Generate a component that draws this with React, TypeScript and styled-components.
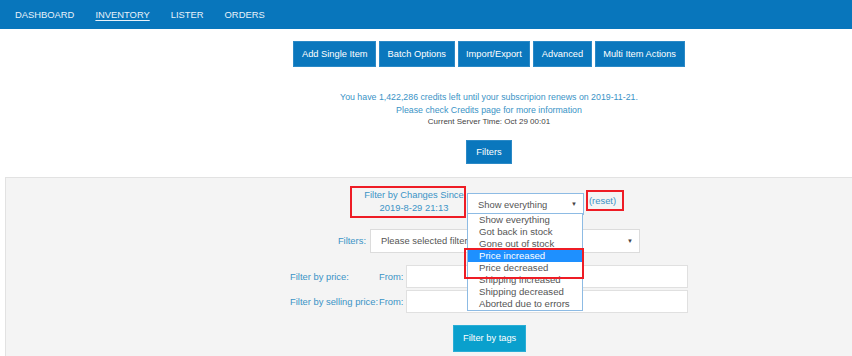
import styled, { createGlobalStyle } from "styled-components";

const GlobalStyle = createGlobalStyle`
  html, body {
    margin: 0;
    padding: 0;
    background: #fff;
    overflow: hidden;
  }
  body {
    font-family: "Liberation Sans", Arial, sans-serif;
    font-size: 9.4px;
    color: #555;
  }
  * {
    box-sizing: border-box;
  }
`;

const Page = styled.div`
  width: 852px;
  height: 356px;
  overflow: hidden;
`;

const NavBar = styled.nav`
  height: 29px;
  background: #0876bc;
  display: flex;
  align-items: center;
  padding-left: 15px;
  gap: 21px;
`;

const NavLink = styled.a<{ $active?: boolean }>`
  color: #e8f2fa;
  font-size: 9.4px;
  text-transform: uppercase;
  text-decoration: ${(p) => (p.$active ? "underline" : "none")};
  text-underline-offset: 2px;
  cursor: pointer;
`;

const Main = styled.div`
  padding-left: 126px;
  display: flex;
  flex-direction: column;
  align-items: center;
`;

const Toolbar = styled.div`
  display: flex;
  gap: 3px;
  margin-top: 12px;
`;

const BlueButton = styled.button<{ $tone?: "primary" | "info" }>`
  height: ${(p) => (p.$tone === "info" ? "27px" : "26px")};
  padding: 0 ${(p) => (p.$tone === "info" ? "9px" : "7.5px")};
  background: ${(p) => (p.$tone === "info" ? "#0aa0cd" : "#0a77bd")};
  border: 1px solid ${(p) => (p.$tone === "info" ? "#2aaed6" : "#2b89c6")};
  color: #fff;
  font-family: "Liberation Sans", Arial, sans-serif;
  font-size: 9.3px;
  cursor: pointer;
`;

const Notice = styled.div`
  margin-top: 24px;
  text-align: center;
  line-height: 12.5px;
  color: #3a93c6;
  font-size: 8.8px;
`;

const ServerTime = styled.div`
  color: #444;
  font-size: 8px;
`;

const FiltersToggle = styled(BlueButton)`
  margin-top: 11px;
  height: 24px;
  padding: 0 9px;
`;

const Panel = styled.div`
  margin: 13px -20px 0 5px;
  background: #f4f4f4;
  border: 1px solid #e2e2e2;
  height: 200px;
  padding-top: 8px;
`;

const Row = styled.div<{ $indent: number; $top?: number }>`
  display: flex;
  align-items: center;
  padding-left: ${(p) => p.$indent}px;
  margin-top: ${(p) => p.$top ?? 0}px;
`;

const Marked = styled.div`
  border: 2px solid #ee1c25;
`;

const ChangesLabel = styled(Marked)`
  width: 116px;
  height: 32px;
  padding: 0 0 0 12px;
  text-align: center;
  line-height: 13px;
  color: #3a93c6;
  position: relative;
  z-index: 2;
`;

const ResetBox = styled(Marked)`
  margin: -2px 0 0 2px;
  width: 38px;
  height: 21px;
  display: flex;
  align-items: center;
  padding-left: 1px;
  color: #3a93c6;
`;

const SelectWrap = styled.div`
  position: relative;
  margin-top: 5px;
  margin-left: 1px;
`;

const SelectBox = styled.div<{ $width: number; $height: number; $focused?: boolean }>`
  width: ${(p) => p.$width}px;
  height: ${(p) => p.$height}px;
  margin-left: ${(p) => (p.$focused ? 0 : 4)}px;
  background: #fff;
  border: 1px solid ${(p) => (p.$focused ? "#8dbbe4" : "#dcdcdc")};
  display: flex;
  align-items: center;
  justify-content: space-between;
  padding: 0 6px 0 10px;
  color: #555;
`;

const Arrow = styled.span`
  font-size: 6px;
  color: #444;
`;

const OptionList = styled.ul`
  position: absolute;
  top: 20px;
  left: 0;
  width: 116px;
  margin: 0;
  padding: 0;
  list-style: none;
  background: #fff;
  border: 1px solid #8dbbe4;
  z-index: 3;
`;

const OptionItem = styled.li<{ $selected?: boolean }>`
  height: 12px;
  line-height: 12px;
  padding-left: 11px;
  font-size: 9.6px;
  background: ${(p) => (p.$selected ? "#1e90ff" : "transparent")};
  color: ${(p) => (p.$selected ? "#fff" : "#555")};
`;

const OptionMark = styled(Marked)`
  position: absolute;
  top: 34px;
  left: -4px;
  width: 120px;
  height: 31px;
`;

const FieldLabel = styled.span<{ $width: number; $align?: "left" | "right" }>`
  width: ${(p) => p.$width}px;
  text-align: ${(p) => p.$align ?? "left"};
  color: #3a93c6;
  white-space: nowrap;
`;

const TextInput = styled.input`
  width: 282px;
  height: 23px;
  margin-left: 4px;
  background: #fff;
  border: 1px solid #e0e0e0;
  outline: none;
`;

const options = [
  "Show everything",
  "Got back in stock",
  "Gone out of stock",
  "Price increased",
  "Price decreased",
  "Shipping increased",
  "Shipping decreased",
  "Aborted due to errors",
];

export default function App() {
  return (
    <Page>
      <GlobalStyle />
      <NavBar>
        <NavLink>Dashboard</NavLink>
        <NavLink $active>Inventory</NavLink>
        <NavLink>Lister</NavLink>
        <NavLink>Orders</NavLink>
      </NavBar>

      <Main>
        <Toolbar>
          <BlueButton>Add Single Item</BlueButton>
          <BlueButton>Batch Options</BlueButton>
          <BlueButton>Import/Export</BlueButton>
          <BlueButton>Advanced</BlueButton>
          <BlueButton>Multi Item Actions</BlueButton>
        </Toolbar>

        <Notice>
          <div>You have 1,422,286 credits left until your subscripion renews on 2019-11-21.</div>
          <div>Please check Credits page for more information</div>
          <ServerTime>Current Server Time: Oct 29 00:01</ServerTime>
        </Notice>

        <FiltersToggle>Filters</FiltersToggle>
      </Main>

      <Panel>
        <Row $indent={344}>
          <ChangesLabel>
            Filter by Changes Since
            <br />
            2019-8-29 21:13
          </ChangesLabel>
          <SelectWrap>
            <SelectBox $width={117} $height={22} $focused>
              Show everything
              <Arrow>▼</Arrow>
            </SelectBox>
            <OptionList>
              {options.map((o) => (
                <OptionItem key={o} $selected={o === "Price increased"}>
                  {o}
                </OptionItem>
              ))}
              <OptionMark />
            </OptionList>
          </SelectWrap>
          <ResetBox>(reset)</ResetBox>
        </Row>

        <Row $indent={294} $top={11}>
          <FieldLabel $width={66} $align="right">
            Filters:
          </FieldLabel>
          <SelectBox $width={270} $height={24}>
            Please selected filter
            <Arrow>▼</Arrow>
          </SelectBox>
        </Row>

        <Row $indent={284} $top={12}>
          <FieldLabel $width={89}>Filter by price:</FieldLabel>
          <FieldLabel $width={23}>From:</FieldLabel>
          <TextInput />
        </Row>

        <Row $indent={284} $top={2}>
          <FieldLabel $width={89}>Filter by selling price:</FieldLabel>
          <FieldLabel $width={23}>From:</FieldLabel>
          <TextInput />
        </Row>

        <Row $indent={447} $top={12}>
          <BlueButton $tone="info">Filter by tags</BlueButton>
        </Row>
      </Panel>
    </Page>
  );
}
